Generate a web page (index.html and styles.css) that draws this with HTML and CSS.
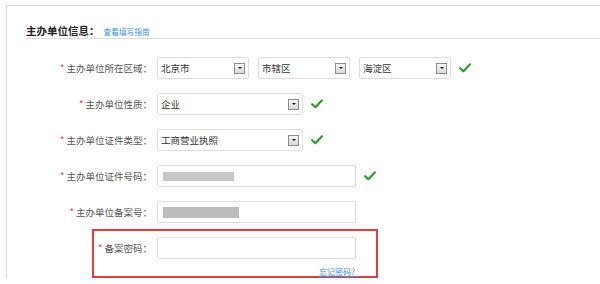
FILE: index.html
```html
<!DOCTYPE html>
<html lang="zh">
<head>
<meta charset="utf-8">
<link rel="stylesheet" href="styles.css">
</head>
<body>
<div class="panel">
  <div class="head"><span class="title">主办单位信息：</span><a class="guide">查看填写指南</a></div>
  <div class="form">
    <div class="row">
      <label class="lbl"><span class="req">*</span> 主办单位所在区域：</label>
      <div class="sel w92">北京市<span class="dd"></span></div>
      <div class="sel w92 gap">市辖区<span class="dd"></span></div>
      <div class="sel w92 gap">海淀区<span class="dd"></span></div>
      <svg class="ok" viewBox="0 0 12 10" width="12" height="10"><path d="M1.2 5.2 L4.4 8.2 L10.8 1.4" fill="none" stroke="#2a9d2a" stroke-width="2.2" stroke-linecap="round" stroke-linejoin="round"/></svg>
    </div>
    <div class="row">
      <label class="lbl"><span class="req">*</span> 主办单位性质：</label>
      <div class="sel w146">企业<span class="dd"></span></div>
      <svg class="ok" viewBox="0 0 12 10" width="12" height="10"><path d="M1.2 5.2 L4.4 8.2 L10.8 1.4" fill="none" stroke="#2a9d2a" stroke-width="2.2" stroke-linecap="round" stroke-linejoin="round"/></svg>
    </div>
    <div class="row">
      <label class="lbl"><span class="req">*</span> 主办单位证件类型：</label>
      <div class="sel w146">工商营业执照<span class="dd"></span></div>
      <svg class="ok" viewBox="0 0 12 10" width="12" height="10"><path d="M1.2 5.2 L4.4 8.2 L10.8 1.4" fill="none" stroke="#2a9d2a" stroke-width="2.2" stroke-linecap="round" stroke-linejoin="round"/></svg>
    </div>
    <div class="row">
      <label class="lbl"><span class="req">*</span> 主办单位证件号码：</label>
      <div class="inp"><span class="mask m1"></span></div>
      <svg class="ok" viewBox="0 0 12 10" width="12" height="10"><path d="M1.2 5.2 L4.4 8.2 L10.8 1.4" fill="none" stroke="#2a9d2a" stroke-width="2.2" stroke-linecap="round" stroke-linejoin="round"/></svg>
    </div>
    <div class="row tight">
      <label class="lbl"><span class="req">*</span> 主办单位备案号：</label>
      <div class="inp"><span class="mask m2"></span></div>
    </div>
    <div class="pwd-box">
      <div class="row last">
        <label class="lbl narrow"><span class="req">*</span> 备案密码：</label>
        <div class="inp"></div>
      </div>
      <div class="forgot"><a>忘记密码？</a></div>
    </div>
  </div>
</div>
</body>
</html>
```

FILE: styles.css
```css
* { box-sizing: border-box; }
body {
  margin: 0;
  background: #fff;
  font-family: "Noto Sans CJK SC", "Noto Sans", sans-serif;
  color: #444;
}
.panel {
  margin: 5px 0 0 6px;
  height: 273px;
  border-top: 1px solid #dcdcdc;
  border-left: 1px solid #dcdcdc;
}
.head {
  margin-left: 19px;
  padding-top: 18px;
  height: 33px;
  line-height: 14px;
  border-bottom: 1px solid #dcdcdc;
  display: flex;
  align-items: baseline;
}
.title {
  font-size: 10.5px;
  font-weight: bold;
  color: #222;
}
.guide {
  margin-left: 4px;
  font-size: 7.7px;
  color: #3b8ee0;
}
.form {
  padding-top: 18px;
}
.row {
  display: flex;
  align-items: center;
  height: 22px;
  margin-bottom: 14px;
}
.row.tight { margin-bottom: 6px; }
.row.last { margin-bottom: 0; }
.lbl {
  width: 145px;
  flex-shrink: 0;
  margin-right: 5px;
  text-align: right;
  font-size: 9.5px;
  color: #555;
  white-space: nowrap;
}
.lbl.narrow { width: 58px; }
.req { color: #e4393c; }
.sel {
  height: 22px;
  border: 1px solid #dedede;
  border-radius: 2px;
  display: flex;
  align-items: center;
  padding: 0 3px 0 3px;
  font-size: 9.5px;
  color: #333;
  flex-shrink: 0;
}
.w92 { width: 92px; }
.w146 { width: 146px; }
.gap { margin-left: 9px; }
.dd {
  margin-left: auto;
  width: 11px;
  height: 11px;
  border: 1px solid #8c8c8c;
  background: linear-gradient(#f6f6f6, #d8d8d8);
  position: relative;
}
.dd::after {
  content: "";
  position: absolute;
  left: 2.5px;
  top: 3.5px;
  border-left: 2.5px solid transparent;
  border-right: 2.5px solid transparent;
  border-top: 2.5px solid #111;
}
.inp {
  width: 199px;
  height: 22px;
  border: 1px solid #dedede;
  border-radius: 2px;
  flex-shrink: 0;
  display: flex;
  align-items: center;
  padding-left: 5px;
}
.mask {
  display: block;
  background: #c7c7c7;
  filter: blur(0.6px);
}
.m1 { width: 71px; height: 9px; }
.m2 { width: 76px; height: 11px; background: #bcbcbc; }
.ok { margin-left: 8px; flex-shrink: 0; }
.pwd-box {
  margin: 0 0 0 85px;
  width: 286px;
  height: 49px;
  border: 2px solid #e83b3b;
  padding-top: 6px;
}
.forgot {
  margin-top: 4px;
  padding-right: 17px;
  text-align: right;
  line-height: 11px;
}
.forgot a {
  font-size: 8px;
  color: #3b8ee0;
  text-decoration: underline;
}
```
